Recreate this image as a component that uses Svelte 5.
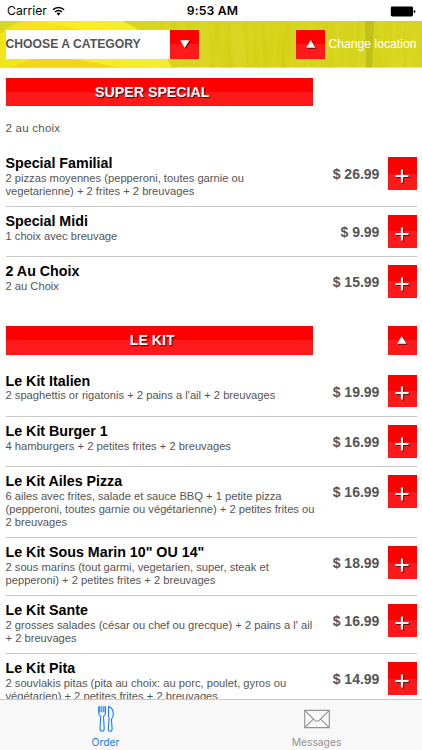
<script>
  const categories = [
    {
      name: 'SUPER SPECIAL',
      note: '2 au choix',
      items: [
        { name: 'Special Familial', lines: ['2 pizzas moyennes (pepperoni, toutes garnie ou', 'vegetarienne) + 2 frites + 2 breuvages'], price: '26.99' },
        { name: 'Special Midi', lines: ['1 choix avec breuvage'], price: '9.99' },
        { name: '2 Au Choix', lines: ['2 au Choix'], price: '15.99' },
      ],
    },
    {
      name: 'LE KIT',
      items: [
        { name: 'Le Kit Italien', lines: ["2 spaghettis or rigatonis + 2 pains a l'ail + 2 breuvages"], price: '19.99' },
        { name: 'Le Kit Burger 1', lines: ['4 hamburgers + 2 petites frites + 2 breuvages'], price: '16.99' },
        { name: 'Le Kit Ailes Pizza', lines: ['6 ailes avec frites, salade et sauce BBQ + 1 petite pizza', '(pepperoni, toutes garnie ou végétarienne) + 2 petites frites ou', '2 breuvages'], price: '16.99' },
        { name: 'Le Kit Sous Marin 10" OU 14"', lines: ['2 sous marins (tout garmi, vegetarien, super, steak et', 'pepperoni) + 2 petites frites + 2 breuvages'], price: '18.99' },
        { name: 'Le Kit Sante', lines: ["2 grosses salades (césar ou chef ou grecque) + 2 pains a l' ail", '+ 2 breuvages'], price: '16.99' },
        { name: 'Le Kit Pita', lines: ['2 souvlakis pitas (pita au choix: au porc, poulet, gyros ou', 'végétarien) + 2 petites frites + 2 breuvages'], price: '14.99' },
      ],
    },
  ];

  let tab = $state('order');
</script>

{#snippet arrow(down)}
  <svg class="arrow" viewBox="0 0 12 12" width="12" height="12">
    <path d={down ? 'M1.2 2.2h9.2L5.8 10z' : 'M1.2 9.8h9.2L5.8 2z'} fill="#fff" />
  </svg>
{/snippet}

<div class="screen">
  <div class="status">
    <div class="carrier">
      <span>Carrier</span>
      <svg viewBox="0 0 14 10" width="13" height="10">
        <path d="M1 3.7a8.4 8.4 0 0 1 12 0M3.2 6a5.3 5.3 0 0 1 7.6 0" fill="none" stroke="#000" stroke-width="1.7" />
        <path d="M4.9 7.7a3 3 0 0 1 4.2 0L7 9.9z" />
      </svg>
    </div>
    <strong>9:53 AM</strong>
    <svg class="battery" viewBox="0 0 26 11" width="26" height="11">
      <rect x=".8" y=".5" width="22.2" height="10" rx="1.4" />
      <path d="M23.8 3.8q1.6.4 1.6 1.7t-1.6 1.7z" />
    </svg>
  </div>

  <header>
    <svg class="wood" viewBox="0 0 422 47" preserveAspectRatio="none">
      <defs>
        <linearGradient id="fruit" x2="1">
          <stop offset="0" stop-color="#eee615" />
          <stop offset=".4" stop-color="#fcec1c" />
          <stop offset="1" stop-color="#f0ee32" />
        </linearGradient>
        <filter id="grain" x="0" y="0" width="100%" height="100%">
          <feTurbulence type="fractalNoise" baseFrequency=".14 .012" numOctaves="3" seed="4" />
          <feColorMatrix values="0 0 0 0 .55  0 0 0 0 .55  0 0 0 0 0  .8 0 0 0 -.27" />
        </filter>
      </defs>
      <rect width="422" height="47" fill="#d9d722" />
      <rect width="422" height="47" filter="url(#grain)" />
      <path d="M365 0h9l-2 47h-6z" fill="#b8b713" opacity=".7" />
      <path d="M0 0h122Q154 13 172 47H0z" fill="url(#fruit)" />
      <path d="M0 0h24Q10 4 0 13z" fill="#d5d923" />
      <path d="M12 47Q36 34 62 37T118 47z" fill="#f5d51a" />
      <path d="M24 0Q60 3 84 10H8Q14 3 24 0z" fill="#f8e01c" />
    </svg>
    <button class="select">
      <span class="label">CHOOSE A CATEGORY</span>
      <span class="red square">{@render arrow(true)}</span>
    </button>
    <button class="location">
      <span class="red square">{@render arrow(false)}</span>
      <span>Change location</span>
    </button>
  </header>

  <main>
    {#each categories as category, i}
      <section>
        <div class="heading">
          <h2 class="red">{category.name}</h2>
          {#if i > 0}
            <button class="red square" aria-label="Back to top">{@render arrow(false)}</button>
          {/if}
        </div>
        {#if category.note}
          <p class="note">{category.note}</p>
        {/if}
        <ul class:noted={category.note}>
          {#each category.items as item}
            <li>
              <div class="info">
                <h3>{item.name}</h3>
                {#each item.lines as line}
                  <p>{line}</p>
                {/each}
              </div>
              <span class="price">$ {item.price}</span>
              <button class="red add" aria-label="Add {item.name}">
                <svg viewBox="0 0 14 14" width="14" height="14">
                  <path d="M7 .5v13M.5 7h13" stroke="#fff" stroke-width="2.2" />
                </svg>
              </button>
            </li>
          {/each}
        </ul>
      </section>
    {/each}
  </main>

  <nav>
    <button class:active={tab === 'order'} onclick={() => (tab = 'order')}>
      <svg viewBox="0 0 18 28" width="18" height="28">
        <g fill="none" stroke="currentColor" stroke-width="1.1" stroke-linejoin="round">
          <path d="M2.2 1.3v6.2M4.2 1.3v6M6.2 1.3v6M8.2 1.3v6.2" />
          <path d="M2 1.3 1.7 8q0 2.4 2 3.4L3 23.8q0 2.5 2.1 2.5t2.1-2.5l-.7-12.4q2-1 2-3.4l-.3-6.7" />
          <path d="M11.5 1.5v8.7l.6 2.8-.8 10.8q0 2.5 1.9 2.5t1.9-2.5l-.7-9.4q1.9-2.5 1.9-5.6 0-5.8-4.8-7.3z" />
        </g>
      </svg>
      <span>Order</span>
    </button>
    <button class:active={tab === 'messages'} onclick={() => (tab = 'messages')}>
      <svg viewBox="0 0 26 28" width="26" height="28">
        <g fill="none" stroke="currentColor" stroke-width="1.1">
          <path d="M.7 5.4h24.6v17.2H.7z" />
          <path d="m.7 5.4 9.8 9.8q2.5 2.2 5 0l9.8-9.8M.7 22.6l8.6-8.4M25.3 22.6l-8.6-8.4" />
        </g>
      </svg>
      <span>Messages</span>
    </button>
  </nav>
</div>

<style>
  :global(body) {
    background: #fff;
    overflow: hidden;
  }
  .screen {
    display: flex;
    flex-direction: column;
    width: 422px;
    height: 750px;
    overflow: hidden;
    font-family: "Liberation Sans", Arial, sans-serif;
    color: #555;
  }
  button {
    margin: 0;
    padding: 0;
    border: 0;
    background: none;
    font: inherit;
    color: inherit;
  }
  h2, h3, p, ul {
    margin: 0;
    padding: 0;
  }
  svg {
    display: block;
  }
  .status {
    display: grid;
    grid-template-columns: 1fr auto 1fr;
    align-items: center;
    flex: none;
    height: 21px;
    padding: 0 6px 0 7px;
    font: 12.2px/22px Inter, sans-serif;
    color: #000;
  }
  .status strong {
    padding-left: 2px;
    font-weight: 600;
    letter-spacing: 0.15px;
  }
  .carrier {
    display: flex;
    align-items: center;
    gap: 5px;
  }
  .battery {
    justify-self: end;
  }
  header {
    display: flex;
    justify-content: space-between;
    align-items: center;
    flex: none;
    position: relative;
    height: 46.5px;
    padding: 0 5.5px 0 5.5px;
    box-sizing: border-box;
  }
  .wood {
    position: absolute;
    inset: 0;
    width: 100%;
    height: 100%;
  }
  .red {
    background: linear-gradient(#fe0000 50%, #fe1a1a 50%);
  }
  .square {
    display: flex;
    align-items: center;
    justify-content: center;
    width: 28.6px;
    height: 28.6px;
  }
  .arrow,
  .add svg {
    filter: drop-shadow(1px 1px 0.7px rgb(0 0 0 / 0.6));
  }
  .select,
  .location {
    display: flex;
    align-items: center;
    position: relative;
  }
  .select {
    width: 193.5px;
    background: #fff;
    font-size: 12.2px;
    font-weight: bold;
  }
  .label {
    flex: 1;
    text-align: left;
    white-space: nowrap;
  }
  .location {
    gap: 3.5px;
    font-size: 12.2px;
    color: #fff;
  }
  main {
    flex: 1;
    min-height: 0;
    overflow: hidden;
    padding: 10px 5.5px 0;
  }
  .heading {
    display: flex;
    justify-content: space-between;
  }
  h2 {
    width: 307.5px;
    height: 28.6px;
    padding-right: 14px;
    box-sizing: border-box;
    font-size: 14.2px;
    line-height: 29px;
    text-align: center;
    color: #fff;
    text-shadow: 1px 1px 1px rgb(0 0 0 / 0.7);
  }
  .note {
    margin-top: 14px;
    font-size: 11.6px;
    line-height: 16px;
    letter-spacing: 0.2px;
  }
  ul {
    list-style: none;
    margin: 11.9px 0 20px;
  }
  ul.noted {
    margin-top: 13.1px;
  }
  li {
    display: flex;
    align-items: flex-start;
    box-sizing: border-box;
    min-height: 50px;
    padding: 7px 0 8px;
  }
  li:first-child {
    min-height: 49.5px;
  }
  li + li {
    border-top: 1px solid #c8c8c8;
  }
  .info {
    flex: 1;
    white-space: nowrap;
  }
  h3 {
    font-size: 14.25px;
    line-height: 15.5px;
    color: #000;
  }
  .info p {
    font-size: 11.18px;
    line-height: 13.2px;
  }
  .price {
    margin: 2px 8.5px 0 0;
    font-size: 14px;
    font-weight: bold;
    line-height: 32px;
  }
  .add {
    display: flex;
    align-items: center;
    justify-content: center;
    width: 28.6px;
    height: 32.6px;
    margin-top: 1px;
    padding-top: 5px;
    box-sizing: border-box;
  }
  nav {
    display: grid;
    grid-template-columns: 1fr 1fr;
    flex: none;
    box-sizing: border-box;
    height: 51px;
    border-top: 1px solid #c9c9c9;
    background: #f8f8f8;
    font: 10.3px/12px Inter, sans-serif;
    color: #929292;
  }
  nav button {
    display: flex;
    flex-direction: column;
    align-items: center;
    gap: 3px;
    padding-top: 5px;
  }
  nav .active {
    color: #157efb;
  }
</style>
